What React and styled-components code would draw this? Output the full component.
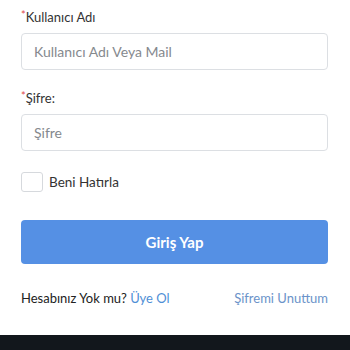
import React from "react";
import styled, { createGlobalStyle } from "styled-components";

const Global = createGlobalStyle`
  html, body { margin: 0; padding: 0; background: #fff; }
  body { font-family: Lato, "Noto Sans", sans-serif; }
  * { box-sizing: border-box; }
`;

const Page = styled.div`
  width: 350px;
  min-height: 350px;
  display: flex;
  flex-direction: column;
`;

const Form = styled.form`
  display: flex;
  flex-direction: column;
  padding: 7px 22px 0 21px;
`;

const Field = styled.div`
  display: flex;
  flex-direction: column;
  gap: 6px;
  margin-bottom: ${(p) => p.$mb || 0}px;
`;

const Label = styled.label`
  font-size: 13px;
  line-height: 20px;
  color: #333;
`;

const Star = styled.span`
  color: #e04848;
  font-size: 11px;
  vertical-align: top;
  line-height: 16px;
`;

const Input = styled.input`
  height: 37px;
  width: 100%;
  border: 1px solid #dcdfe3;
  border-radius: 4px;
  padding: 0 12px;
  font-family: inherit;
  font-size: 14px;
  color: #333;
  outline: none;
  &::placeholder { color: #85898e; }
`;

const CheckRow = styled.label`
  display: flex;
  align-items: center;
  gap: 6px;
  height: 20px;
  margin-top: 21px;
  font-size: 13.5px;
  color: #333;
`;

const Box = styled.span`
  width: 22px;
  height: 20px;
  border: 1px solid #d6d9dd;
  border-radius: 3px;
  background: #fff;
`;

const Button = styled.button`
  margin-top: 28px;
  height: 44px;
  width: 100%;
  border: none;
  border-radius: 4px;
  background: #5590e4;
  color: #fff;
  font-family: inherit;
  font-weight: 700;
  font-size: 15px;
`;

const Links = styled.div`
  display: flex;
  justify-content: space-between;
  align-items: center;
  margin-top: 24px;
  line-height: 20px;
  font-size: 13px;
  color: #222;
`;

const Link = styled.a`
  color: ${(p) => (p.$muted ? "#6b93c9" : "#4f8fd6")};
  text-decoration: none;
`;

const Footer = styled.div`
  margin-top: 27px;
  height: 16px;
  background: #12171c;
`;

export default function App() {
  return (
    <Page>
      <Global />
      <Form onSubmit={(e) => e.preventDefault()}>
        <Field $mb={18}>
          <Label><Star>*</Star>Kullanıcı Adı</Label>
          <Input placeholder="Kullanıcı Adı Veya Mail" />
        </Field>
        <Field>
          <Label><Star>*</Star>Şifre:</Label>
          <Input type="password" placeholder="Şifre" />
        </Field>
        <CheckRow>
          <Box />
          Beni Hatırla
        </CheckRow>
        <Button type="submit">Giriş Yap</Button>
        <Links>
          <span>
            Hesabınız Yok mu? <Link href="#">Üye Ol</Link>
          </span>
          <Link $muted href="#">Şifremi Unuttum</Link>
        </Links>
      </Form>
      <Footer />
    </Page>
  );
}
